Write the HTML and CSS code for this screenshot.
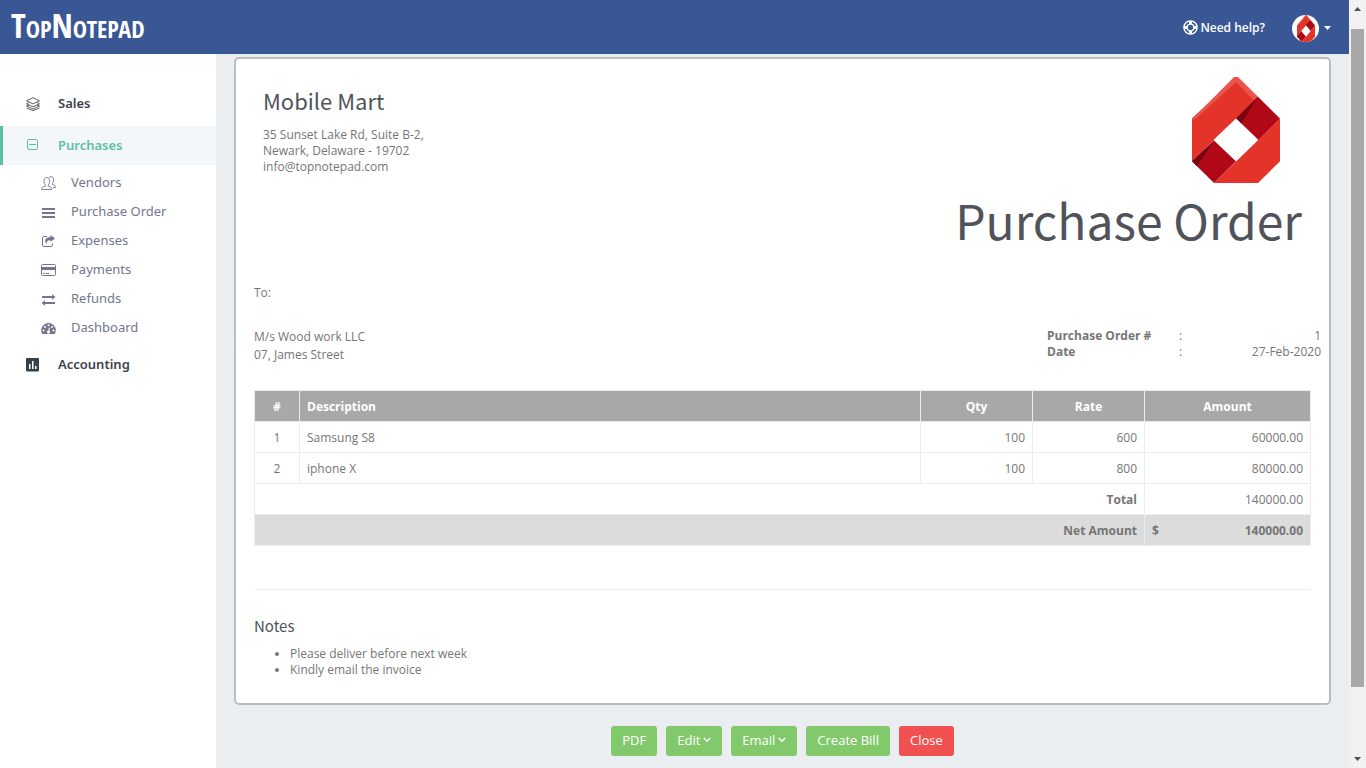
FILE: index.html
```html
<!DOCTYPE html>
<html lang="en">
<head>
<meta charset="utf-8">
<title>TopNotepad - Purchase Order</title>
<link rel="stylesheet" href="styles.css">
</head>
<body>
<svg class="defs" width="0" height="0" aria-hidden="true">
  <symbol id="brand" viewBox="0 0 88 107" preserveAspectRatio="none">
    <path d="M44 0 0 42v43l66-64z" fill="#e43329"/>
    <path d="M42 0h4l20 20-4 4L44 5 3 43H0z" fill="#e9544c"/>
    <path d="M66 20 88 42 66 64 44 42z" fill="#b00816"/>
    <path d="M66 20 44 42l5 5z" fill="#760510"/>
    <path d="M88 42v43l-22 22H22z" fill="#e43329"/>
    <path d="M22 64 44 85 22 107 0 85z" fill="#b00816"/>
    <path d="M22 64 0 85l5 5z" fill="#760510"/>
    <path d="M44 42 66 63 44 85 22 63z" fill="#fff"/>
  </symbol>
</svg>
<div class="frame">
  <div class="app">
    <header class="topbar">
      <a class="logo" href="#">TopNotepad</a>
      <div class="topbar-right">
        <a class="help" href="#">
          <svg width="15" height="15" viewBox="0 0 15 15" fill="none" stroke="#fff"><circle cx="7.500" cy="7.500" r="6.600" stroke-width="1.400"/><circle cx="7.500" cy="7.500" r="3.400" stroke-width="1.400"/><path d="M7.500 1v3M7.500 11v3M1 7.500h3M11 7.500h3" stroke-width="3"/></svg>
          Need help?
        </a>
        <button class="account" type="button" aria-label="Account">
          <span class="avatar"><svg width="18" height="27"><use href="#brand" width="18" height="27"/></svg></span>
          <svg width="7" height="4" viewBox="0 0 7 4"><path d="M0 0h7L3.500 4z" fill="#fff"/></svg>
        </button>
      </div>
    </header>
    <div class="body">
      <nav class="sidebar">
        <a class="nav-main" href="#">
          <svg width="14" height="14" viewBox="0 0 14 14" fill="none" stroke="#4a505a"><path d="M7 .7 13.500 3.800 7 6.900.5 3.800zM3 5.500.5 6.800 7 9.800l6.500-3L11 5.500M3 7.900.5 9 7 12l6.500-3L11 7.900M.5 11 7 13.600l6.500-2.600" stroke-width=".9"/></svg>
          Sales</a>
        <a class="nav-main active" href="#">
          <svg width="14" height="14" viewBox="0 0 14 14" fill="none" stroke="#5bbfa7"><rect x="1.500" y="1.500" width="10" height="10" rx="1.500"/><path d="M3 6.500h7"/></svg>
          Purchases</a>
        <div class="nav-sub">
          <a href="#"><svg width="15" height="15" viewBox="0 0 15 15" fill="none" stroke="#74768d" stroke-width=".9"><path d="M.6 13.500c0-2 1-2.500 3.800-3.300V9C3.300 8 3 6.500 3 5c0-2 1-3.500 2.800-3.500S8.600 3 8.600 5c0 1.500-.4 3-1.400 4v1.200c2.800.8 3.700 1.300 3.700 3.300zM8 1.700C8.500 1 9.200.7 10 .7c1.700 0 2.600 1.200 2.600 3.100 0 1.500-.4 2.700-1.200 3.500v1.200c2.200.6 3.100 1 3.100 3H12"/></svg>Vendors</a>
          <a href="#"><svg width="15" height="15" viewBox="0 0 15 15" fill="#74768d"><path d="M1 3h13v2H1zM1 7h13v2H1zM1 11h13v2H1z"/></svg>Purchase Order</a>
          <a href="#"><svg width="15" height="15" viewBox="0 0 15 15"><path d="M6 2.500H3A1.500 1.500 0 0 0 1.500 4v7A1.500 1.500 0 0 0 3 12.500h7a1.500 1.500 0 0 0 1.500-1.500V9.500" fill="none" stroke="#74768d"/><path d="M9.500 1 14 4.500 9.500 8V6.200C6.500 6 5.500 7.500 5.500 10.300 2.800 6 5 2.800 9.500 2.900z" fill="#74768d"/></svg>Expenses</a>
          <a href="#"><svg width="15" height="15" viewBox="0 0 15 15"><rect x=".5" y="1.500" width="14" height="11" rx="1" fill="none" stroke="#74768d"/><path d="M0 4h15v3H0zM2 10h2v1H2zM5 10h3v1H5z" fill="#74768d"/></svg>Payments</a>
          <a href="#"><svg width="15" height="15" viewBox="0 0 15 15" fill="#74768d"><path d="M1 4h10V2.300L14.500 5 11 7.700V6H1zM14 10H4V8.300L.5 11 4 13.700V12h10z"/></svg>Refunds</a>
          <a href="#"><svg width="15" height="15" viewBox="0 0 15 15"><path d="M7.500 2A7.300 7.300 0 0 0 .2 9.300c0 1.500.4 2.700 1.100 3.700h12.400c.7-1 1.100-2.200 1.100-3.700A7.300 7.300 0 0 0 7.500 2z" fill="#74768d"/><g fill="#fff"><circle cx="2.500" cy="9.500" r="1"/><circle cx="4" cy="5.900" r="1"/><circle cx="7.500" cy="4.300" r="1"/><circle cx="11" cy="5.900" r="1"/><circle cx="12.500" cy="9.500" r="1"/><path d="m8 6.500 1 .3-.7 3a1.500 1.500 0 1 1-1.100-.2z"/></g></svg>Dashboard</a>
        </div>
        <a class="nav-main" href="#">
          <svg width="14" height="14" viewBox="0 0 14 14"><rect width="13" height="13.500" rx="1" fill="#36424b"/><path d="M3 6h1.500v5H3zM6 3h1.500v8H6zM9 8h1.500v3H9z" fill="#fff"/></svg>
          Accounting</a>
      </nav>
      <main class="main">
        <article class="sheet">
          <div class="sheet-head">
            <div class="company">
              <h2>Mobile Mart</h2>
              <p>35 Sunset Lake Rd, Suite B-2,<br>Newark, Delaware - 19702<br>info@topnotepad.com</p>
            </div>
            <div class="doc-brand">
              <svg class="doc-logo" width="88" height="107" role="img" aria-label="Company logo"><use href="#brand" width="88" height="106"/></svg>
              <h1>Purchase Order</h1>
            </div>
          </div>
          <p class="to">To:</p>
          <div class="parties">
            <p class="vendor">M/s Wood work LLC<br>07, James Street</p>
            <dl class="meta">
              <dt>Purchase Order #</dt><dd>:</dd><dd class="num">1</dd>
              <dt>Date</dt><dd>:</dd><dd class="num">27-Feb-2020</dd>
            </dl>
          </div>
          <table class="items">
            <colgroup><col class="c-index"><col><col class="c-qty"><col class="c-qty"><col class="c-amount"></colgroup>
            <thead><tr><th>#</th><th class="left">Description</th><th>Qty</th><th>Rate</th><th>Amount</th></tr></thead>
            <tbody>
              <tr><td class="center">1</td><td>Samsung S8</td><td class="num">100</td><td class="num">600</td><td class="num">60000.00</td></tr>
              <tr><td class="center">2</td><td>iphone X</td><td class="num">100</td><td class="num">800</td><td class="num">80000.00</td></tr>
              <tr><td class="num bold" colspan="4">Total</td><td class="num">140000.00</td></tr>
              <tr class="net"><td class="num" colspan="4">Net Amount</td><td><div class="money"><span>$</span><span>140000.00</span></div></td></tr>
            </tbody>
          </table>
          <hr>
          <section class="notes">
            <h3>Notes</h3>
            <ul><li>Please deliver before next week</li><li>Kindly email the invoice</li></ul>
          </section>
        </article>
        <div class="actions">
          <button class="btn" type="button">PDF</button>
          <button class="btn" type="button">Edit <svg width="8" height="6" viewBox="0 0 8 6"><path d="m.8 1 3.200 3.200L7.200 1" fill="none" stroke="#fff" stroke-width="1.500"/></svg></button>
          <button class="btn" type="button">Email <svg width="8" height="6" viewBox="0 0 8 6"><path d="m.8 1 3.200 3.200L7.200 1" fill="none" stroke="#fff" stroke-width="1.500"/></svg></button>
          <button class="btn" type="button">Create Bill</button>
          <button class="btn danger" type="button">Close</button>
        </div>
      </main>
    </div>
  </div>
  <div class="scrollbar" aria-hidden="true">
    <svg width="7" height="4" viewBox="0 0 7 4"><path d="M0 4h7L3.500 0z" fill="#505050"/></svg>
    <div class="track"><div class="thumb"></div></div>
    <svg width="7" height="4" viewBox="0 0 7 4"><path d="M0 0h7L3.500 4z" fill="#505050"/></svg>
  </div>
</div>
</body>
</html>
```
FILE: styles.css
```css
* { box-sizing: border-box; }
body, h1, h2, h3, p, ul, dl, dd { margin: 0; }
body {
  font: 12px/16px "Open Sans", sans-serif;
  color: #767676;
  background: #eaeef1;
}
a { color: inherit; text-decoration: none; }
button { font: inherit; color: inherit; border: 0; cursor: pointer; }
svg { display: block; flex: none; }
.defs { position: absolute; }
.frame { display: flex; min-height: 100vh; }
.app { flex: 1; display: flex; flex-direction: column; min-width: 0; }

.topbar {
  display: flex;
  justify-content: space-between;
  align-items: center;
  height: 54px;
  padding: 0 18px 0 11px;
  background: #3a5795;
  color: #fff;
}
.logo {
  padding-bottom: 4px;
  font: bold 34px/48px "Liberation Sans Narrow", "Open Sans Condensed", "DejaVu Sans Condensed", sans-serif;
  font-variant: small-caps;
}
.topbar-right { display: flex; align-items: center; gap: 27px; }
.help { display: flex; align-items: center; gap: 2px; padding-top: 1px; font-weight: 600; }
.account { display: flex; align-items: center; gap: 5px; padding: 2px 0 0; background: none; }
.avatar {
  display: flex;
  justify-content: center;
  width: 27px;
  height: 27px;
  border-radius: 50%;
  background: #fff;
  overflow: hidden;
}

.body { flex: 1; display: flex; }
.sidebar {
  flex: none;
  width: 216px;
  padding-top: 30px;
  background: #fff;
  font-family: "Noto Sans", sans-serif;
  font-size: 13px;
}
.nav-main {
  display: flex;
  align-items: center;
  gap: 18px;
  height: 39px;
  padding: 0 0 2px 26px;
  color: #3b424c;
  font-weight: 600;
}
.nav-main.active {
  margin-top: 3px;
  padding-left: 23px;
  border-left: 3px solid #5bbfa7;
  background: #f3f7fa;
  color: #5bbfa7;
}
.nav-main svg { margin-top: 2px; }
.nav-main.active svg { margin-top: 1px; }
.nav-sub { padding: 2px 0 4px 41px; color: #74768d; }
.nav-sub a { display: flex; align-items: center; gap: 15px; height: 29px; }
.nav-sub svg { margin-top: 3px; }

.main { flex: 1; min-width: 0; padding: 3px 18px 12px; }
.sheet {
  padding: 18px;
  border: 2px solid #bbbbc0;
  border-radius: 5px;
  background: #fff;
}
.sheet-head { display: flex; justify-content: space-between; padding: 0 9px; }
h1, h2, h3 {
  font-family: "Noto Sans CJK SC", sans-serif;
  font-weight: 400;
  color: #50545a;
}
.company h2 { margin: 9px 0 13px; font-size: 22px; line-height: 28px; }
.doc-brand { text-align: right; }
.doc-logo { margin: 0 22px 0 auto; }
.doc-brand h1 { margin-top: 5px; font-size: 48px; line-height: 60px; }
.to { margin-top: 36px; }
.parties { display: flex; justify-content: space-between; margin-top: 27px; margin-right: -10px; }
.vendor { line-height: 18px; }
.meta { display: grid; grid-template-columns: 132px 60px 82px; align-content: start; }
.meta dt { font-weight: 700; }
.num, .items .num { text-align: right; }

.items {
  width: 100%;
  margin-top: 26px;
  table-layout: fixed;
  border-collapse: collapse;
}
.c-index { width: 45px; }
.c-qty { width: 112px; }
.c-amount { width: 166px; }
.items th, .items td { height: 31px; padding: 2px 7px 0; border: 1px solid #eaeef1; }
.items th { background: #a8a8a8; color: #fff; }
.items .left { text-align: left; }
.items .center { text-align: center; }
.bold, .net { font-weight: 700; }
.net { background: #dcdcdc; }
.money { display: flex; justify-content: space-between; }
hr { margin: 43px 0 0; border: 0; border-top: 1px solid #eaeef1; }
.notes h3 { margin: 26px 0 10px; font-size: 15px; line-height: 20px; }
.notes ul { padding-left: 36px; margin-bottom: 7px; }

.actions { display: flex; justify-content: center; gap: 9px; margin-top: 21px; }
.btn {
  display: flex;
  align-items: center;
  gap: 3px;
  height: 30px;
  padding: 0 11px 2px;
  border-radius: 3px;
  background: #82c96b;
  color: #fff;
  font-size: 13px;
}
.btn.danger { background: #f05050; }

.scrollbar {
  display: flex;
  flex-direction: column;
  align-items: center;
  gap: 7px;
  width: 17px;
  padding: 7px 0;
  background: #f1f1f1;
}
.track { flex: 1; width: 13px; padding-top: 11px; }
.thumb { height: 90vh; max-height: 658px; background: #a8a8a8; }
```
